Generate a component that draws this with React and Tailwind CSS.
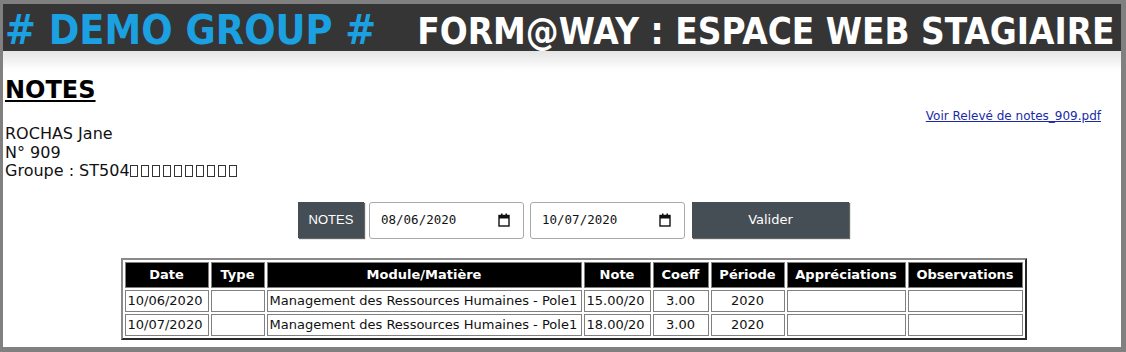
import React from 'react';

const rows = [
  { date: '10/06/2020', type: '', module: 'Management des Ressources Humaines - Pole1', note: '15.00/20', coeff: '3.00', periode: '2020' },
  { date: '10/07/2020', type: '', module: 'Management des Ressources Humaines - Pole1', note: '18.00/20', coeff: '3.00', periode: '2020' },
];

const CalendarIcon = () => (
  <svg width="12" height="14" viewBox="0 0 12 14" fill="none">
    <rect x="1" y="2.5" width="10" height="10.5" stroke="#111" strokeWidth="1.4" />
    <rect x="1" y="2.5" width="10" height="3" fill="#111" />
    <rect x="3" y="0.5" width="1.5" height="2.5" fill="#111" />
    <rect x="7.5" y="0.5" width="1.5" height="2.5" fill="#111" />
  </svg>
);

const DateField = ({ value }) => (
  <div className="w-[155px] h-[37px] flex items-center justify-between pl-[11px] pr-[13px] bg-white border border-[#a9a9a9] rounded-[3px] text-[12.5px] text-[#111] font-['DejaVu_Sans_Mono',monospace]">
    <span>{value}</span>
    <CalendarIcon />
  </div>
);

// caractères non affichables du groupe (rendus en "tofu")
const Tofu = () => (
  <span className="inline-block w-[8px] h-[12px] border border-[#333] mr-[3px] align-[-1px]" />
);

const headers = [
  ['Date', 'w-[84px]'],
  ['Type', 'w-[54px]'],
  ['Module/Matière', 'w-[315px]'],
  ['Note', 'w-[67px]'],
  ['Coeff', 'w-[56px]'],
  ['Période', 'w-[74px]'],
  ['Appréciations', 'w-[119px]'],
  ['Observations', 'w-[115px]'],
];

export default function App() {
  return (
    <div className="h-[352px] bg-white border-l-[3px] border-t-4 border-r-[5px] border-b-[5px] border-[#808080] overflow-hidden font-['DejaVu_Sans',sans-serif] text-black">
      {/* bandeau */}
      <div className="h-[47px] bg-[#353535] flex items-baseline pl-[2px] pt-[6px] leading-none whitespace-nowrap font-['DejaVu_Sans_Condensed','DejaVu_Sans',sans-serif] font-bold">
        <span className="text-[41px] text-[#1ba1e2]"># DEMO GROUP #</span>
        <span className="text-[36.6px] text-white ml-[41px]">FORM@WAY : ESPACE WEB STAGIAIRE</span>
      </div>
      <div className="h-[19px] bg-gradient-to-b from-[#e4e4e4] to-white" />

      <div className="pl-[2px]">
        <h1 className="mt-[6px] text-[24px] leading-[28px] font-bold underline">NOTES</h1>

        <div className="mt-[5px] flex justify-end pr-[20px] text-[12px] leading-[14px]">
          <a href="#" className="text-[#1a2aa8] underline">Voir Relevé de notes_909.pdf</a>
        </div>

        <div className="mt-[2px] text-[16px] leading-[18.5px] text-[#111]">
          <div>ROCHAS Jane</div>
          <div>N° 909</div>
          <div>
            Groupe : ST504
            {Array.from({ length: 10 }).map((_, i) => (
              <Tofu key={i} />
            ))}
          </div>
        </div>
      </div>

      <div className="pl-[23px] flex flex-col items-center">
        <div className="mt-[21px] flex items-center">
          <button className="w-[66px] h-[36px] bg-[#454d55] text-white text-[13px] font-['Liberation_Sans',sans-serif] shadow-[1px_1px_1px_rgba(0,0,0,0.6)]">
            NOTES
          </button>
          <div className="ml-[5px]"><DateField value="08/06/2020" /></div>
          <div className="ml-[6px]"><DateField value="10/07/2020" /></div>
          <button className="ml-[7px] w-[157px] h-[36px] bg-[#454d55] text-white text-[13px] shadow-[1px_1px_1px_rgba(0,0,0,0.6)]">
            Valider
          </button>
        </div>

        <table className="mt-[19px] table-fixed border-separate border-spacing-[2px] border-2 border-t-[#8a8a8a] border-l-[#8a8a8a] border-b-[#2a2a2a] border-r-[#2a2a2a] text-[13px]">
          <thead>
            <tr>
              {headers.map(([label, w]) => (
                <th key={label} className={`${w} h-[26px] bg-black text-white font-bold text-center border border-[#808080] px-[2px]`}>
                  {label}
                </th>
              ))}
            </tr>
          </thead>
          <tbody>
            {rows.map((r, i) => (
              <tr key={i} className="text-[#111]">
                <td className="h-[22px] border border-[#808080] px-[2px]">{r.date}</td>
                <td className="border border-[#808080] px-[2px]">{r.type}</td>
                <td className="border border-[#808080] px-[2px] whitespace-nowrap">{r.module}</td>
                <td className="border border-[#808080] px-[2px]">{r.note}</td>
                <td className="border border-[#808080] px-[2px] text-center">{r.coeff}</td>
                <td className="border border-[#808080] px-[2px] text-center">{r.periode}</td>
                <td className="border border-[#808080] px-[2px]"></td>
                <td className="border border-[#808080] px-[2px]"></td>
              </tr>
            ))}
          </tbody>
        </table>
      </div>
    </div>
  );
}
